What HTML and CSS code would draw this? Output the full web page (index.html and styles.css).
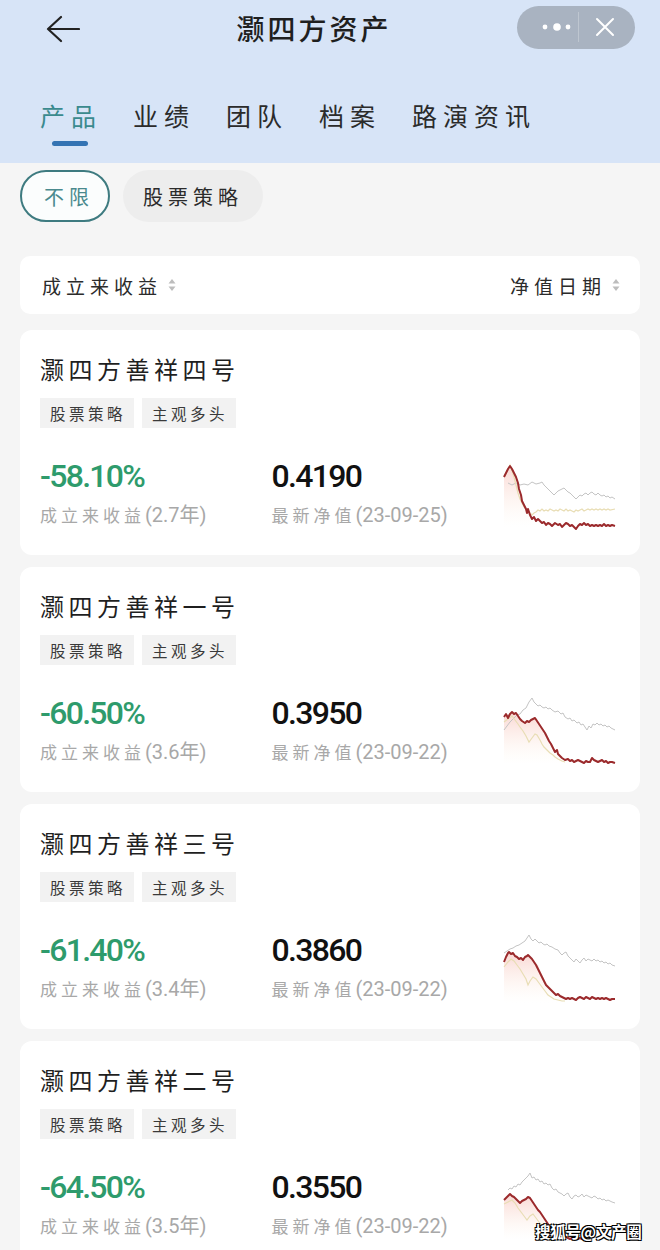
FILE: index.html
```html
<!DOCTYPE html>
<html lang="zh-CN">
<head>
    <meta charset="UTF-8">
    <meta name="viewport" content="width=device-width, initial-scale=1.0">
    <title>灏四方资产</title>
    <link rel="stylesheet" href="styles.css">
</head>
<body>
    <div class="topbar">
        <div class="nav-row">
            <div class="back">
                <svg width="34" height="28" viewBox="0 0 34 28">
                    <path d="M15 2 L2 14 L15 26 M2 14 H33" fill="none" stroke="#222" stroke-width="2.2" stroke-linecap="round" stroke-linejoin="round"/>
                </svg>
            </div>
            <div class="page-title">灏四方资产</div>
            <div class="capsule">
                <svg class="cap-more" width="40" height="12" viewBox="0 0 40 12">
                    <circle cx="7" cy="6" r="2.4" fill="#fff"/>
                    <circle cx="19" cy="6" r="3.8" fill="#fff"/>
                    <circle cx="30" cy="6" r="2.4" fill="#fff"/>
                </svg>
                <span class="cap-line"></span>
                <svg class="cap-close" width="20" height="20" viewBox="0 0 20 20">
                    <path d="M2 2 L18 18 M18 2 L2 18" stroke="#fff" stroke-width="2" stroke-linecap="round"/>
                </svg>
            </div>
        </div>
        <div class="tabs">
            <div class="tab active">产品</div>
            <div class="tab">业绩</div>
            <div class="tab">团队</div>
            <div class="tab">档案</div>
            <div class="tab">路演资讯</div>
        </div>
    </div>

    <div class="filters">
        <div class="chip selected">不限</div>
        <div class="chip">股票策略</div>
    </div>

    <div class="sort-bar">
        <div class="sort-item">成立来收益
            <svg class="sort-icon" width="8" height="14" viewBox="0 0 8 14"><path d="M4 1 L7.5 5.5 H0.5 Z M4 13 L7.5 8.5 H0.5 Z" fill="#bdbdbd"/></svg>
        </div>
        <div class="sort-item">净值日期
            <svg class="sort-icon" width="8" height="14" viewBox="0 0 8 14"><path d="M4 1 L7.5 5.5 H0.5 Z M4 13 L7.5 8.5 H0.5 Z" fill="#bdbdbd"/></svg>
        </div>
    </div>

    <div class="list">
        <div class="card">
            <div class="fund-name">灏四方善祥四号</div>
            <div class="tags"><span class="tag">股票策略</span><span class="tag">主观多头</span></div>
            <div class="stats">
                <div class="stat ret">
                    <div class="num green">-58.10%</div>
                    <div class="label">成立来收益<span class="paren">(2.7年)</span></div>
                </div>
                <div class="stat nav">
                    <div class="num">0.4190</div>
                    <div class="label">最新净值<span class="paren">(23-09-25)</span></div>
                </div>
                <svg class="spark" width="120" height="76" viewBox="0 0 120 76">
                    <defs>
                        <linearGradient id="glow1" x1="0" y1="0" x2="0" y2="1">
                            <stop offset="0" stop-color="#f08a80" stop-opacity="0.35"/>
                            <stop offset="1" stop-color="#fbe6c8" stop-opacity="0"/>
                        </linearGradient>
                    </defs>
                    <polygon fill="url(#glow1)" points="4,22 10,10 16,22 22,46 28,56 34,64 40,68 40,72 4,72"/>
                    <polyline fill="none" stroke="#c4c4c4" stroke-width="1" points="8,28 12,30 16,28 20,30 24,29 28,30 32,27 36,29 40,28 42,27 44,30 46,32 48,34 50,36 52,38 54,40 56,38 58,36 60,35 62,34 64,33 66,35 68,37 70,38 72,40 74,42 76,44 78,42 80,40 82,41 84,39 86,38 88,40 90,38 92,37 94,39 96,40 98,38 100,40 102,41 104,40 106,42 108,41 110,43 112,42 115,44"/>
                    <polyline fill="none" stroke="#e8ddb4" stroke-width="1.2" points="4,22 8,14 10,10 12,16 14,22 16,30 18,38 20,44 22,48 24,52 26,54 28,56 30,58 32,60 34,58 36,57 38,55 40,56 42,54 44,56 46,55 48,56 50,54 52,55 54,56 56,55 58,56 60,54 62,55 64,56 66,54 68,56 70,55 72,56 74,57 76,55 78,56 80,55 82,54 84,56 86,55 88,54 90,55 92,54 94,55 96,54 98,55 100,54 102,55 104,54 106,55 108,54 110,55 115,54"/>
                    <polyline fill="none" stroke="#9b2a2c" stroke-width="2" stroke-linejoin="round" points="4,22 6,18 8,14 10,11 12,14 14,18 16,22 18,28 19,34 21,40 22,46 24,50 26,54 27,58 28,54 30,60 32,64 34,62 36,66 38,64 40,66 42,68 44,67 46,70 48,68 50,69 52,71 55,68 58,70 60,69 62,72 64,70 66,68 68,69 70,71 72,70 74,72 76,74 78,71 80,69 82,70 84,68 86,70 88,69 90,71 92,70 94,71 96,70 98,71 100,70 102,71 104,69 106,71 108,70 110,71 112,70 115,71"/>
                </svg>
            </div>
        </div>

        <div class="card">
            <div class="fund-name">灏四方善祥一号</div>
            <div class="tags"><span class="tag">股票策略</span><span class="tag">主观多头</span></div>
            <div class="stats">
                <div class="stat ret">
                    <div class="num green">-60.50%</div>
                    <div class="label">成立来收益<span class="paren">(3.6年)</span></div>
                </div>
                <div class="stat nav">
                    <div class="num">0.3950</div>
                    <div class="label">最新净值<span class="paren">(23-09-22)</span></div>
                </div>
                <svg class="spark" width="120" height="76" viewBox="0 0 120 76">
                    <defs>
                        <linearGradient id="glow2" x1="0" y1="0" x2="0" y2="1">
                            <stop offset="0" stop-color="#f08a80" stop-opacity="0.35"/>
                            <stop offset="1" stop-color="#fbe6c8" stop-opacity="0"/>
                        </linearGradient>
                    </defs>
                    <polygon fill="url(#glow2)" points="4,25 12,20 25,31 35,26 45,40 55,60 65,68 65,72 4,72"/>
                    <polyline fill="none" stroke="#c4c4c4" stroke-width="1" points="4,38 7,34 10,30 13,27 17,23 20,22 23,18 26,16 29,10 32,6 34,10 36,12 38,14 40,13 42,15 44,16 46,15 48,17 50,16 52,18 55,20 58,19 61,22 63,21 65,25 68,27 70,26 72,29 74,28 77,31 79,30 81,33 83,32 85,35 87,38 89,34 91,36 93,32 95,33 97,31 99,33 101,32 103,34 105,33 107,35 109,34 111,36 113,37 115,38"/>
                    <polyline fill="none" stroke="#e8ddb4" stroke-width="1.2" points="4,30 8,27 12,24 15,28 18,32 20,35 23,39 26,44 29,50 32,46 35,42 37,43 40,48 42,52 44,55 47,58 50,61 53,63 55,65 58,67 62,69 65,70"/>
                    <polyline fill="none" stroke="#9b2a2c" stroke-width="2" stroke-linejoin="round" points="4,25 6,22 8,26 10,22 12,20 14,22 16,21 18,24 20,27 22,29 25,31 27,29 29,30 31,28 33,27 35,26 37,29 39,32 41,35 43,38 45,41 47,45 49,49 51,52 53,56 55,60 57,58 58,62 60,64 62,66 65,68 68,67 70,69 72,68 74,70 76,69 78,68 80,69 82,70 84,71 86,69 88,70 90,70 92,66 94,68 96,69 98,70 100,69 102,68 104,70 106,69 108,71 110,70 112,70 115,71"/>
                </svg>
            </div>
        </div>

        <div class="card">
            <div class="fund-name">灏四方善祥三号</div>
            <div class="tags"><span class="tag">股票策略</span><span class="tag">主观多头</span></div>
            <div class="stats">
                <div class="stat ret">
                    <div class="num green">-61.40%</div>
                    <div class="label">成立来收益<span class="paren">(3.4年)</span></div>
                </div>
                <div class="stat nav">
                    <div class="num">0.3860</div>
                    <div class="label">最新净值<span class="paren">(23-09-22)</span></div>
                </div>
                <svg class="spark" width="120" height="76" viewBox="0 0 120 76">
                    <defs>
                        <linearGradient id="glow3" x1="0" y1="0" x2="0" y2="1">
                            <stop offset="0" stop-color="#f08a80" stop-opacity="0.35"/>
                            <stop offset="1" stop-color="#fbe6c8" stop-opacity="0"/>
                        </linearGradient>
                    </defs>
                    <polygon fill="url(#glow3)" points="4,33 9,23 20,30 28,26 38,36 45,52 55,64 65,70 65,74 4,74"/>
                    <polyline fill="none" stroke="#c4c4c4" stroke-width="1" points="4,24 7,22 10,20 13,19 16,17 19,16 22,14 25,12 27,9 29,6 31,10 33,12 35,10 37,12 39,14 41,13 43,15 45,16 47,15 49,17 52,18 55,20 58,21 60,24 62,26 64,24 66,23 68,27 70,29 72,31 74,33 76,30 78,32 80,34 82,31 84,29 86,32 88,30 90,31 92,32 94,30 96,32 98,31 100,33 102,32 104,34 106,33 108,35 110,34 112,36 115,37"/>
                    <polyline fill="none" stroke="#e8ddb4" stroke-width="1.2" points="4,38 8,33 11,30 14,32 17,36 20,40 23,45 26,50 28,56 30,52 33,48 36,50 39,54 42,58 45,62 48,66 51,68 54,70 58,71 62,72 65,72"/>
                    <polyline fill="none" stroke="#9b2a2c" stroke-width="2" stroke-linejoin="round" points="4,33 6,28 8,24 9,23 11,25 13,24 15,27 17,28 19,30 21,29 23,31 25,28 27,27 28,26 30,28 32,30 34,33 36,36 38,40 40,44 42,48 44,52 46,56 48,58 50,60 52,62 54,64 56,66 58,65 60,67 62,68 64,69 66,70 68,69 70,70 72,69 74,70 76,71 78,69 80,68 82,69 84,70 86,68 88,69 90,70 92,68 94,69 96,70 98,69 100,70 102,69 104,70 106,69 108,70 110,71 112,70 115,70"/>
                </svg>
            </div>
        </div>

        <div class="card">
            <div class="fund-name">灏四方善祥二号</div>
            <div class="tags"><span class="tag">股票策略</span><span class="tag">主观多头</span></div>
            <div class="stats">
                <div class="stat ret">
                    <div class="num green">-64.50%</div>
                    <div class="label">成立来收益<span class="paren">(3.5年)</span></div>
                </div>
                <div class="stat nav">
                    <div class="num">0.3550</div>
                    <div class="label">最新净值<span class="paren">(23-09-22)</span></div>
                </div>
                <svg class="spark" width="120" height="76" viewBox="0 0 120 76">
                    <defs>
                        <linearGradient id="glow4" x1="0" y1="0" x2="0" y2="1">
                            <stop offset="0" stop-color="#f08a80" stop-opacity="0.35"/>
                            <stop offset="1" stop-color="#fbe6c8" stop-opacity="0"/>
                        </linearGradient>
                    </defs>
                    <polygon fill="url(#glow4)" points="4,34 10,28 20,37 30,32 40,46 48,58 60,70 60,74 4,74"/>
                    <polyline fill="none" stroke="#c4c4c4" stroke-width="1" points="8,24 10,22 12,23 14,20 16,21 18,18 20,19 22,16 24,14 26,12 28,10 30,7 32,12 34,11 36,14 38,13 40,16 42,15 44,18 46,17 48,19 50,18 52,22 54,24 56,23 58,26 60,27 62,28 64,30 66,28 68,27 70,31 72,33 74,30 76,29 78,31 80,30 82,28 84,31 86,29 88,30 90,31 92,32 94,30 96,31 98,33 100,32 102,34 104,33 106,35 108,34 110,35 112,36 115,37"/>
                    <polyline fill="none" stroke="#e8ddb4" stroke-width="1.2" points="4,38 8,36 12,34 15,37 18,42 21,46 24,50 27,54 30,50 33,48 36,52 39,56 42,60 45,64 48,67 52,70 56,72 60,73"/>
                    <polyline fill="none" stroke="#9b2a2c" stroke-width="2" stroke-linejoin="round" points="4,34 6,32 8,30 10,28 12,30 14,31 16,33 18,35 20,37 22,35 24,34 26,33 28,31 30,32 32,35 34,38 36,41 38,44 40,46 42,49 44,52 46,55 48,58 50,61 52,64 54,66 56,68 58,69 60,70 62,71 64,72 66,71 68,72 70,73 72,72 74,73 76,72 78,73 80,72 82,73 84,72 86,73"/>
                </svg>
            </div>
        </div>
    </div>

    <div class="watermark">搜狐号@文产圈</div>
</body>
</html>
```

FILE: styles.css
```css
body {
    margin: 0;
    width: 660px;
    height: 1250px;
    overflow: hidden;
    position: relative;
    background-color: #f5f5f5;
    font-family: "Noto Sans CJK SC", "Noto Sans", sans-serif;
    color: #222;
}
.topbar {
    height: 163px;
    background-color: #d7e4f7;
}
.nav-row {
    height: 56px;
    display: flex;
    align-items: center;
}
.back {
    width: 111px;
    box-sizing: border-box;
    padding-left: 46px;
    padding-top: 2px;
    display: flex;
}
.page-title {
    flex: 1;
    text-align: center;
    font-size: 28px;
    font-weight: 500;
    letter-spacing: 3px;
    color: #1f1f1f;
}
.capsule {
    width: 118px;
    height: 43px;
    margin-right: 25px;
    margin-top: -2px;
    border-radius: 22px;
    background-color: #a9b3c1;
    display: flex;
    align-items: center;
}
.cap-more {
    margin-left: 21px;
}
.cap-line {
    width: 1px;
    height: 30px;
    background-color: rgba(255, 255, 255, 0.25);
}
.cap-close {
    margin-left: 16px;
}
.tabs {
    display: flex;
    gap: 31px;
    padding-left: 40px;
    padding-top: 44px;
}
.tab {
    font-size: 25px;
    line-height: 30px;
    letter-spacing: 6px;
    color: #2b2b2b;
    position: relative;
}
.tab.active {
    color: #3a8a8e;
}
.tab.active::after {
    content: "";
    position: absolute;
    left: 12px;
    top: 41px;
    width: 36px;
    height: 5px;
    border-radius: 3px;
    background-color: #3473b3;
}
.filters {
    display: flex;
    gap: 13px;
    padding: 7px 20px 0;
}
.chip {
    height: 52px;
    box-sizing: border-box;
    padding: 0 20px;
    border-radius: 26px;
    display: flex;
    align-items: center;
    font-size: 20px;
    letter-spacing: 5px;
    color: #2b2b2b;
    background-color: #ededed;
}
.chip.selected {
    width: 90px;
    padding: 0 0 0 22px;
    border: 2px solid #3e7b80;
    color: #4a8a8e;
    background-color: #fbfdfd;
}
.sort-bar {
    margin: 34px 20px 0;
    height: 58px;
    padding: 0 20px 0 22px;
    background-color: #fff;
    border-radius: 10px;
    display: flex;
    justify-content: space-between;
    align-items: center;
}
.sort-item {
    display: flex;
    align-items: center;
    gap: 6px;
    font-size: 19px;
    letter-spacing: 5px;
    color: #2b2b2b;
}
.list {
    display: flex;
    flex-direction: column;
    gap: 12px;
    margin: 16px 20px 0;
}
.card {
    height: 225px;
    box-sizing: border-box;
    padding: 24px 20px 0;
    background-color: #fff;
    border-radius: 12px;
}
.fund-name {
    font-size: 24px;
    line-height: 30px;
    letter-spacing: 4.5px;
    color: #1f1f1f;
}
.tags {
    display: flex;
    gap: 8px;
    margin-top: 14px;
}
.tag {
    height: 30px;
    width: 94px;
    box-sizing: border-box;
    padding-left: 10px;
    display: flex;
    align-items: center;
    background-color: #f2f2f2;
    font-size: 15.5px;
    letter-spacing: 3.5px;
    color: #3a3a3a;
}
.stats {
    display: flex;
    margin-top: 28px;
}
.stat.ret {
    width: 233px;
}
.stat.nav {
    width: 230px;
}
.num {
    font-family: "Roboto", sans-serif;
    font-size: 32px;
    line-height: 40px;
    font-weight: 500;
    letter-spacing: -1.7px;
    color: #111;
}
.num.green {
    color: #2e9b6c;
}
.label {
    margin-top: 8px;
    font-size: 17px;
    line-height: 22px;
    letter-spacing: 4px;
    color: #a8a8a8;
}
.paren {
    font-family: "Roboto", "Noto Sans CJK SC", sans-serif;
    font-size: 20px;
    letter-spacing: 0;
}
.spark {
    margin-top: -1px;
    flex-shrink: 0;
}
.watermark {
    position: absolute;
    left: 535px;
    top: 1220px;
    font-size: 15.5px;
    font-weight: bold;
    letter-spacing: -0.3px;
    color: #fff;
    text-shadow: -1px -1px 0 #000, 1px -1px 0 #000, -1px 1px 0 #000, 1px 1px 0 #000;
}
```
